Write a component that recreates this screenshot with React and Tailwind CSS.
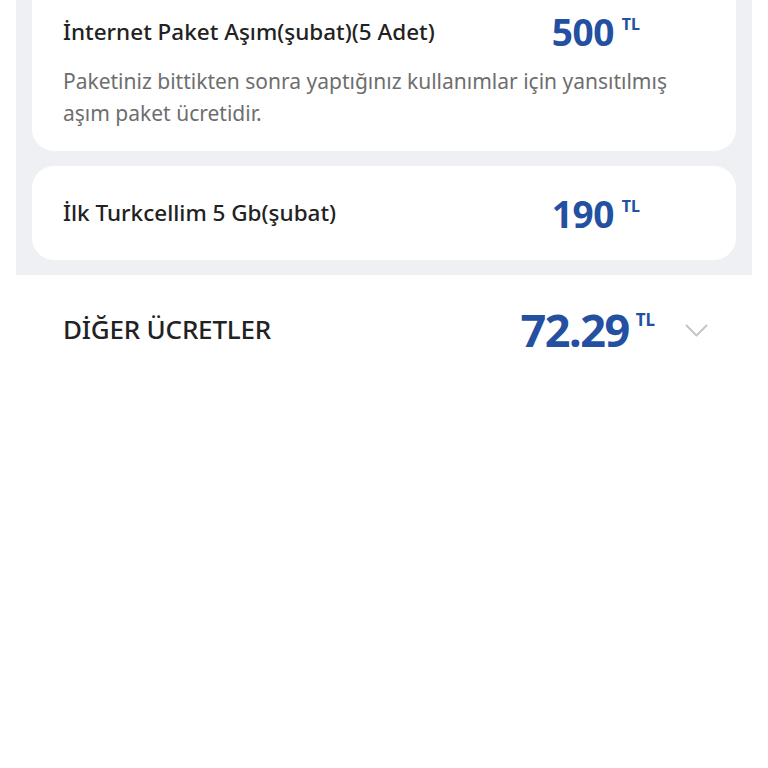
const font = { fontFamily: '"Noto Sans", "Liberation Sans", sans-serif' };

const Price = ({ value, big }) => (
  <div className="flex items-start text-[#2350a0]">
    <span className={big ? 'text-[45px] font-bold leading-none tracking-[-1.5px]' : 'text-[37px] font-bold leading-none tracking-[-0.5px]'}>
      {value}
    </span>
    <span className={big ? 'ml-[7px] mt-[4px] text-[17px] font-bold leading-none' : 'ml-[8px] mt-[3px] text-[16px] font-bold leading-none'}>
      TL
    </span>
  </div>
);

export default function App() {
  return (
    <div className="min-h-[768px] w-[768px] bg-white" style={font}>
      <div className="mx-4 bg-[#eef0f4] px-4 pb-[15px]">
        <div className="rounded-b-[22px] bg-white pl-[31px] pr-[96px] pt-[12px] pb-[22px]">
          <div className="flex h-[39px] items-center justify-between">
            <span className="text-[22.5px] font-medium leading-[32px] text-[#222]">İnternet Paket Aşım(şubat)(5 Adet)</span>
            <Price value="500" />
          </div>
          <p className="mt-[14px] w-[620px] text-[21px] leading-[32px] text-[#6e6e6e]">
            Paketiniz bittikten sonra yaptığınız kullanımlar için yansıtılmış aşım paket ücretidir.
          </p>
        </div>
        <div className="mt-[15px] flex h-[94px] items-center justify-between rounded-[22px] bg-white pl-[31px] pr-[96px]">
          <span className="text-[22.5px] font-medium text-[#222]">İlk Turkcellim 5 Gb(şubat)</span>
          <Price value="190" />
        </div>
      </div>
      <div className="flex items-center justify-between pl-[63px] pr-[60px] pt-[32px]">
        <span className="text-[26px] font-medium tracking-[-0.2px] text-[#222]">DİĞER ÜCRETLER</span>
        <div className="flex items-center gap-[30px]">
          <Price value="72.29" big />
          <svg width="23" height="14" viewBox="0 0 23 14" fill="none" className="mt-[2px]">
            <polyline points="1.5,1.5 11.5,11.5 21.5,1.5" stroke="#c6c6c6" strokeWidth="2" strokeLinecap="round" strokeLinejoin="round" />
          </svg>
        </div>
      </div>
    </div>
  );
}
